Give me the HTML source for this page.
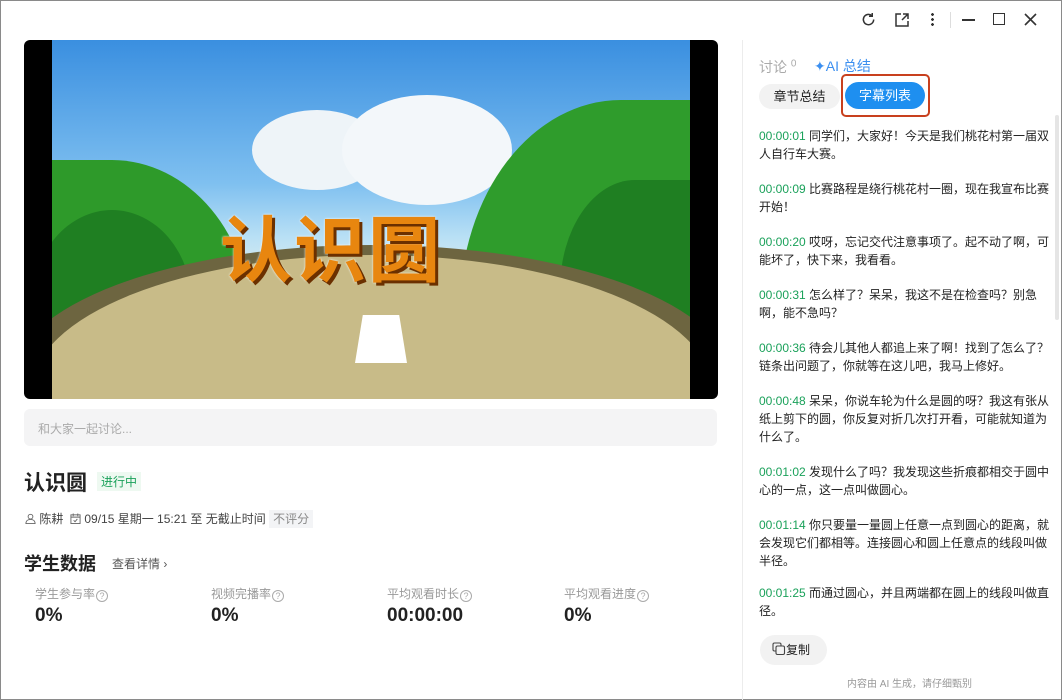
<!DOCTYPE html>
<html><head><meta charset="utf-8"><style>
*{margin:0;padding:0;box-sizing:border-box}
body{width:1062px;height:700px;overflow:hidden;background:#fff;font-family:"Liberation Sans","Noto Sans CJK SC",sans-serif;color:#222;position:relative}
.frame{position:absolute;inset:0;border:1px solid #8a8a8a}
.abs{position:absolute}
.video{left:24px;top:40px;width:694px;height:359px;background:#000;border-radius:6px;overflow:hidden}
.scene{position:absolute;left:28px;top:0;width:638px;height:359px;background:linear-gradient(#3a8fe0 0%,#7fc0f0 40%,#b9e0f5 55%,#d0e8f0 62%);overflow:hidden}
.sub{position:absolute;left:759px;width:296px;font-size:12px;line-height:18px;color:#222}
.sub b{font-weight:normal;color:#1aa15a}
.stat{position:absolute;top:585px;font-size:12px;color:#999}
.val{position:absolute;top:605px;font-size:19px;font-weight:bold;color:#222}
.q{display:inline-block;width:12px;height:12px;border:1px solid #aaa;border-radius:50%;font-size:9px;line-height:10px;text-align:center;color:#aaa;vertical-align:-1px;margin-left:1px}
</style></head><body>
<div class="frame"></div>
<svg class="abs" style="left:861px;top:12px" width="15" height="15" viewBox="0 0 16 16" fill="none" stroke="#333" stroke-width="1.6"><path d="M13.5 8A5.5 5.5 0 1 1 11.5 3.8"/><path d="M12 1v3.5H8.5"/></svg>
<svg class="abs" style="left:894px;top:12px" width="16" height="16" viewBox="0 0 16 16" fill="none" stroke="#333" stroke-width="1.5"><path d="M7 2H2v12h12V9"/><path d="M9 2h5v5M14 2L8 8"/></svg>
<div class="abs" style="left:931px;top:12px;width:3px;height:14px;background:radial-gradient(circle,#333 1.3px,transparent 1.5px) 0 0/3px 5px"></div>
<div class="abs" style="left:950px;top:12px;width:1px;height:16px;background:#ddd"></div>
<div class="abs" style="left:962px;top:19px;width:13px;height:1.5px;background:#333"></div>
<div class="abs" style="left:993px;top:13px;width:12px;height:12px;border:1.5px solid #333"></div>
<svg class="abs" style="left:1024px;top:13px" width="13" height="13" viewBox="0 0 13 13" stroke="#333" stroke-width="1.6"><path d="M1 1L12 12M12 1L1 12"/></svg>
<div class="abs video"><div class="scene">
<div class="abs" style="left:200px;top:70px;width:130px;height:80px;background:#eef4f8;border-radius:50%"></div>
<div class="abs" style="left:290px;top:55px;width:170px;height:110px;background:#f3f7fa;border-radius:50%"></div>
<div class="abs" style="left:0;top:120px;width:200px;height:239px;background:#2e9a2a;border-radius:0 70% 0 0"></div>
<div class="abs" style="left:-20px;top:170px;width:160px;height:189px;background:#1f7f22;border-radius:50% 50% 0 0"></div>
<div class="abs" style="right:0;top:60px;width:230px;height:299px;background:#2f9c2c;border-radius:70% 0 0 0"></div>
<div class="abs" style="right:-20px;top:140px;width:150px;height:219px;background:#1f7f22;border-radius:50% 0 0 0"></div>
<div class="abs" style="left:-40px;top:205px;width:720px;height:270px;background:#6d6540;border-radius:50% 50% 0 0"></div>
<div class="abs" style="left:-20px;top:215px;width:680px;height:270px;background:#c8bb88;border-radius:50% 50% 0 0"></div>
<div class="abs" style="left:303px;top:275px;width:52px;height:48px;background:#fff;clip-path:polygon(15% 0,85% 0,100% 100%,0 100%)"></div>
<div class="abs" style="left:168px;top:152px;font-size:72px;font-weight:bold;color:#e8860f;letter-spacing:2px;text-shadow:3px 3px 0 #6b3000,0 0 2px #fff">认识圆</div>
</div></div>
<div class="abs" style="left:24px;top:409px;width:693px;height:37px;background:#f4f4f5;border-radius:6px;font-size:12px;color:#aaa;padding:11px 14px">和大家一起讨论...</div>
<div class="abs" style="left:24px;top:467px;font-size:21px;font-weight:bold">认识圆</div>
<div class="abs" style="left:97px;top:472px;font-size:12px;color:#1aa15a;background:#eef9f1;padding:1px 4px">进行中</div>
<div class="abs" style="left:25px;top:510px;font-size:12px;color:#444">
<svg width="11" height="11" viewBox="0 0 12 12" fill="none" stroke="#666" stroke-width="1" style="vertical-align:-1px"><circle cx="6" cy="4" r="2.6"/><path d="M1 11.5c0-3 2.2-4.5 5-4.5s5 1.5 5 4.5z"/></svg> 陈耕 &nbsp;<svg width="11" height="11" viewBox="0 0 12 12" fill="none" stroke="#666" stroke-width="1" style="vertical-align:-1px"><rect x="1" y="2" width="10" height="9.5"/><path d="M3.5 0.5v3M8.5 0.5v3M1 4.5h10M4 8l1.5 1.5L8 6.5"/></svg> 09/15 星期一 15:21 至 无截止时间 <span style="background:#f3f4f6;color:#888;padding:2px 4px">不评分</span></div>
<div class="abs" style="left:24px;top:550px;font-size:18px;font-weight:bold">学生数据</div>
<div class="abs" style="left:112px;top:555px;font-size:12px;color:#555">查看详情 ›</div>
<div class="stat" style="left:35px">学生参与率<span class="q">?</span></div>
<div class="stat" style="left:211px">视频完播率<span class="q">?</span></div>
<div class="stat" style="left:387px">平均观看时长<span class="q">?</span></div>
<div class="stat" style="left:564px">平均观看进度<span class="q">?</span></div>
<div class="val" style="left:35px">0%</div>
<div class="val" style="left:211px">0%</div>
<div class="val" style="left:387px">00:00:00</div>
<div class="val" style="left:564px">0%</div>
<div class="abs" style="left:742px;top:40px;width:1px;height:660px;background:#ececec"></div>
<div class="abs" style="left:1055px;top:115px;width:4px;height:205px;background:#e5e5e5;border-radius:2px"></div>
<div class="abs" style="left:759px;top:57px;font-size:14px;color:#aaa">讨论 <sup style="font-size:10px">0</sup></div>
<div class="abs" style="left:814px;top:56px;font-size:14px;color:#3b8ff0">✦AI 总结</div>
<div class="abs" style="left:759px;top:84px;width:81px;height:25px;background:#f2f2f2;border-radius:13px;font-size:13px;text-align:center;line-height:25px">章节总结</div>
<div class="abs" style="left:841px;top:74px;width:89px;height:43px;border:2px solid #c8401e;border-radius:5px"></div>
<div class="abs" style="left:845px;top:82px;width:80px;height:27px;background:#1e8ff0;border-radius:14px;color:#fff;font-size:13px;text-align:center;line-height:27px">字幕列表</div>
<div class="sub" style="top:127px"><b>00:00:01</b> 同学们，大家好！今天是我们桃花村第一届双人自行车大赛。</div>
<div class="sub" style="top:180px"><b>00:00:09</b> 比赛路程是绕行桃花村一圈，现在我宣布比赛开始！</div>
<div class="sub" style="top:233px"><b>00:00:20</b> 哎呀，忘记交代注意事项了。起不动了啊，可能坏了，快下来，我看看。</div>
<div class="sub" style="top:286px"><b>00:00:31</b> 怎么样了？呆呆，我这不是在检查吗？别急啊，能不急吗？</div>
<div class="sub" style="top:339px"><b>00:00:36</b> 待会儿其他人都追上来了啊！找到了怎么了？链条出问题了，你就等在这儿吧，我马上修好。</div>
<div class="sub" style="top:392px"><b>00:00:48</b> 呆呆，你说车轮为什么是圆的呀？我这有张从纸上剪下的圆，你反复对折几次打开看，可能就知道为什么了。</div>
<div class="sub" style="top:463px"><b>00:01:02</b> 发现什么了吗？我发现这些折痕都相交于圆中心的一点，这一点叫做圆心。</div>
<div class="sub" style="top:516px"><b>00:01:14</b> 你只要量一量圆上任意一点到圆心的距离，就会发现它们都相等。连接圆心和圆上任意点的线段叫做半径。</div>
<div class="sub" style="top:584px"><b>00:01:25</b> 而通过圆心，并且两端都在圆上的线段叫做直径。</div>
<div class="abs" style="left:760px;top:635px;width:67px;height:30px;background:#f2f2f2;border-radius:15px;font-size:12px;line-height:30px;padding-left:12px">
<svg width="14" height="14" viewBox="0 0 14 14" fill="none" stroke="#444" stroke-width="1.1" style="vertical-align:-2px"><rect x="1" y="1" width="8" height="8" rx="1.5"/><rect x="4" y="4" width="8.5" height="8.5" rx="1.5" fill="#f2f2f2"/></svg>复制</div>
<div class="abs" style="left:847px;top:675px;font-size:10px;color:#999">内容由 AI 生成，请仔细甄别</div>
</body></html>
